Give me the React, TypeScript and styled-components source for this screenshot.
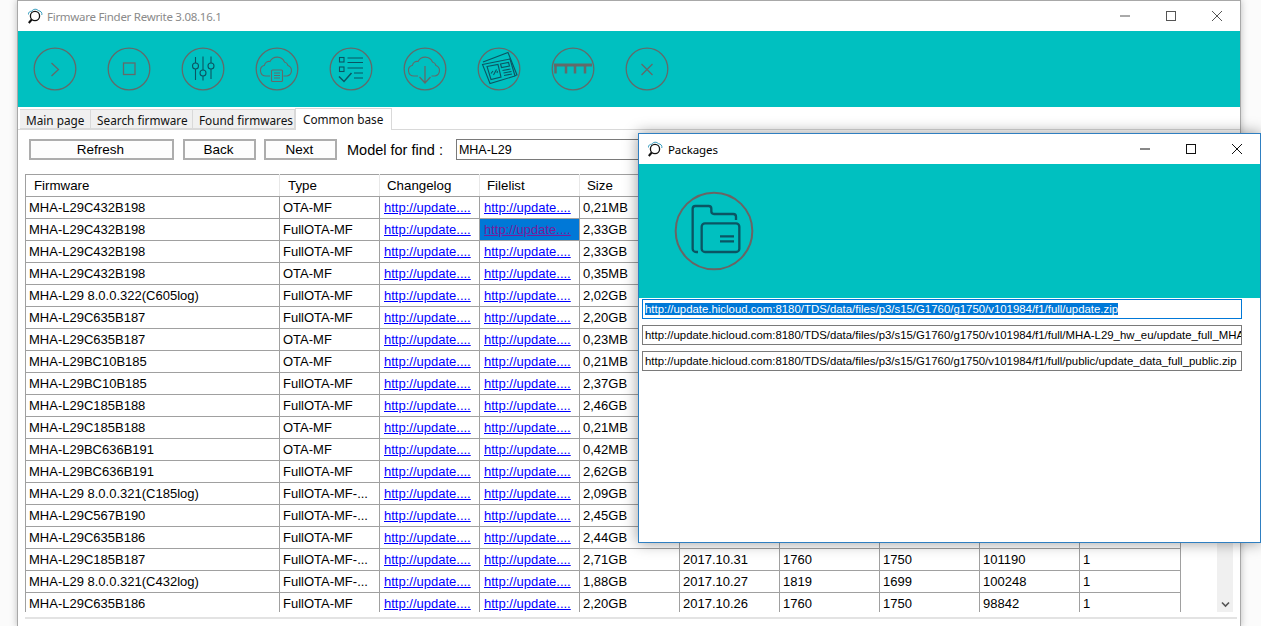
import React from "react";
import styled, {createGlobalStyle} from "styled-components";

const GlobalStyle = createGlobalStyle`
  html, body {
    margin: 0;
    padding: 0;
    background: #fbfbfb;
  }
`

const Desktop = styled.div`
  position: relative;
  width: 1261px;
  height: 626px;
  overflow: hidden;
  font-family: "Liberation Sans", Arial, sans-serif;
`

const MainWindow = styled.div`
  margin-left: 17px;
  width: 1222px;
  height: 626px;
  background: #fff;
  border: 1px solid #a8a8a8;
  border-bottom: none;
  box-shadow: 0 0 7px rgba(0, 0, 0, .25);
`

const TitleBar = styled.div`
  display: flex;
  align-items: center;
  height: 30px;
  padding-left: 9px;
`

const TitleText = styled.div<{ $muted?: boolean }>`
  margin-left: ${p => p.$muted ? 4 : 5}px;
  font-family: "Noto Sans", sans-serif;
  font-size: 11.5px;
  letter-spacing: ${p => p.$muted ? "-.28px" : "-.1px"};
  color: ${p => p.$muted ? "#8a8a8a" : "#000"};
  white-space: nowrap;
`

const WindowButtons = styled.div`
  display: flex;
  margin-left: auto;
`

const WindowButton = styled.div`
  display: flex;
  align-items: center;
  justify-content: center;
  width: 46px;
  height: 30px;
`

const Toolbar = styled.div`
  display: flex;
  align-items: center;
  gap: 30px;
  height: 76px;
  padding-left: 15px;
  background: #00c0c0;
`

const TabStrip = styled.div`
  display: flex;
  align-items: flex-end;
  height: 22px;
  padding-left: 2px;
  border-bottom: 1px solid #d9d9d9;
  font-family: "Noto Sans", sans-serif;
  font-size: 11.8px;
`

const Tab = styled.div<{ $active?: boolean; $width: number }>`
  box-sizing: border-box;
  width: ${p => p.$width}px;
  height: ${p => p.$active ? 22 : 20}px;
  padding-left: ${p => p.$active ? 7 : 6}px;
  line-height: ${p => p.$active ? 20 : 21}px;
  margin-bottom: ${p => p.$active ? -1 : 0}px;
  background: ${p => p.$active ? "#fff" : "#f0f0f0"};
  border: 1px solid #d9d9d9;
  border-bottom: ${p => p.$active ? "none" : "1px solid #d9d9d9"};
  border-left: ${p => p.$active ? "1px solid #d9d9d9" : "none"};
  white-space: nowrap;
  color: #111;
`

const ActionBar = styled.div`
  display: flex;
  align-items: center;
  height: 21px;
  margin-top: 9px;
  padding-left: 11px;
`

const ActionButton = styled.div<{ $width: number; $gap: number }>`
  box-sizing: border-box;
  width: ${p => p.$width}px;
  height: 21px;
  margin-right: ${p => p.$gap}px;
  padding-right: 2px;
  border: 2px solid #adadad;
  background: #fdfdfd;
  font-size: 13.5px;
  line-height: 18px;
  text-align: center;
  color: #000;
`

const FindLabel = styled.div`
  margin: 0 13px 0 1px;
  font-size: 14.5px;
  white-space: nowrap;
  color: #000;
`

const FindInput = styled.div`
  box-sizing: border-box;
  width: 300px;
  height: 21px;
  padding-left: 2px;
  border: 1px solid #7a7a7a;
  font-size: 12.5px;
  line-height: 20px;
  color: #000;
`

const GridFrame = styled.div`
  display: flex;
  box-sizing: border-box;
  width: 1212px;
  height: 445px;
  margin: 14px 0 0 7px;
  padding-bottom: 5px;
  border-bottom: 2px solid #e3e3e3;
`

const GridArea = styled.div`
  flex: 1;
  overflow: hidden;
`

const GridTable = styled.table`
  table-layout: fixed;
  width: 1155px;
  border-collapse: collapse;
  font-size: 13px;
  color: #000;
`

const HeadCell = styled.th<{ $width: number; $inset: number }>`
  box-sizing: border-box;
  width: ${p => p.$width}px;
  height: 22px;
  padding: 0 0 0 ${p => p.$inset}px;
  font-weight: normal;
  font-size: 13.3px;
  text-align: left;
  background: #fff;
  border: 1px solid #a0a0a0;
  border-left-color: #e8e8e8;
  border-right-color: #e8e8e8;

  &:first-child {
    border-left-color: #a0a0a0;
  }
`

const Cell = styled.td<{ $selected?: boolean; $link?: boolean }>`
  box-sizing: border-box;
  height: 22px;
  padding: 0 0 0 ${p => p.$link ? 4 : 3}px;
  border: 1px solid #a0a0a0;
  white-space: nowrap;
  overflow: hidden;
  background: ${p => p.$selected ? "#0078d7" : "#fff"};
`

const UpdateLink = styled.a<{ $visited?: boolean }>`
  color: ${p => p.$visited ? "#7a1a9a" : "#0000ff"};
  text-decoration: underline;
`

const ScrollTrack = styled.div`
  display: flex;
  align-items: flex-end;
  justify-content: center;
  width: 16px;
  margin-right: 4px;
  padding-bottom: 4px;
  box-sizing: border-box;
  background: #f0f0f0;
`

const PackagesWindow = styled.div`
  position: absolute;
  left: 638px;
  top: 133px;
  box-sizing: border-box;
  width: 623px;
  height: 410px;
  background: #fff;
  border: 1px solid #2f7fc1;
  box-shadow: 0 0 14px rgba(0, 0, 0, .4);
`

const PackagesTitle = styled(TitleBar)`
  padding-left: 8px;
`

const PackagesBanner = styled.div`
  display: flex;
  align-items: center;
  height: 134px;
  padding-left: 35px;
  background: #00c0c0;
`

const UrlList = styled.div`
  display: flex;
  flex-direction: column;
  gap: 6px;
  padding: 1px 0 0 3px;
`

const UrlField = styled.div<{ $focused?: boolean }>`
  box-sizing: border-box;
  width: 600px;
  height: 20px;
  padding-left: 2px;
  border: 1px solid ${p => p.$focused ? "#0078d7" : "#7a7a7a"};
  font-size: 11.4px;
  line-height: 18px;
  white-space: nowrap;
  overflow: hidden;
  color: #000;
`

const SelectedText = styled.span`
  background: #0078d7;
  color: #fff;
`

const GREY = "#626a6a"
const DARK = "#0b5563"

const Ring = ({children}: { children?: React.ReactNode }) => (
    <svg width="44" height="44" viewBox="0 0 44 44" fill="none" strokeWidth="1.1">
        <circle cx="22" cy="22" r="20.8" stroke={GREY} strokeWidth="1.3"/>
        {children}
    </svg>
)

const Cloud = () => (
    <path stroke={GREY}
          d="M15 29H11a5.5 5.5 0 0 1-1.500-10.800A4.500 4.500 0 0 1 15 14.500A8 8 0 0 1 29.500 15a5 5 0 0 1 3.500 3.500A5.500 5.500 0 0 1 32 29h-3.500"/>
)

const Logo = () => (
    <svg width="16" height="17" viewBox="0 0 16 17" fill="none">
        <path d="M1.500 6.500C1 4.500 3 3 4.800 3.300 6 .8 10 .5 11.500 2.800 13.500 2.800 15.500 4.500 14.800 7" stroke="#3a9fc0" strokeWidth="1"/>
        <circle cx="8" cy="8" r="4.600" stroke="#111" strokeWidth="1.300"/>
        <path d="M4.700 11.500 1.800 15" stroke="#111" strokeWidth="2"/>
    </svg>
)

const toolbarIcons = [
    <Ring key="start"><path d="M18.500 16 25.500 22.500 18.500 29" stroke={GREY} strokeWidth="1.300"/></Ring>,
    <Ring key="stop"><rect x="16.500" y="16" width="11.500" height="11.500" stroke={GREY} strokeWidth="1.300"/></Ring>,
    <Ring key="settings">
        <path stroke={DARK}
              d="M14.500 10v6M14.500 22V33M22 9.500V23M22 29V33.500M30 9.500V16M30 22V32"/>
        <circle cx="14.500" cy="19" r="3" stroke={DARK}/>
        <circle cx="22" cy="26" r="3" stroke={DARK}/>
        <circle cx="30" cy="19" r="3" stroke={DARK}/>
    </Ring>,
    <Ring key="cloud-doc">
        <Cloud/>
        <rect x="16.500" y="23" width="11" height="11.500" rx="1" stroke={GREY}/>
        <path d="M19 26h6M19 28.500h6M19 31h6" stroke={GREY}/>
    </Ring>,
    <Ring key="checklist">
        <g stroke={DARK}>
            <rect x="10.500" y="10.500" width="4.500" height="4.500"/>
            <rect x="10.500" y="20" width="4.500" height="4.500"/>
            <path d="M18.500 11h15.500M18.500 15.500h15.500M18.500 21h15.500M25 26h9M25 31h9"/>
            <path d="M10 29.500 15 34.500 22.500 26" strokeWidth="1.500"/>
        </g>
    </Ring>,
    <Ring key="download">
        <Cloud/>
        <path d="M22 19V36M16.500 30 22 36 27.500 30" stroke={GREY} strokeWidth="1.300"/>
    </Ring>,
    <Ring key="news">
        <g stroke={DARK}>
            <path d="M6 15 31 5.500 40 28 35 29.500"/>
            <path d="M5.500 17.500 33 12 38 29 13 36.500Z" fill="#00c0c0"/>
            <path d="M10 19.500 21 17.500 24 30 14 32.500Z"/>
            <path d="M14 26.500 16 24M16.500 28 19.500 22.500M20 26 20.500 24"/>
            <path d="M23.500 17 31.500 15.500 32.500 19 24.500 20.500Z"/>
            <path d="M25.500 23.500 33.500 22M26.500 26 34.500 24.500M27 28.500 35 27"/>
        </g>
    </Ring>,
    <Ring key="ram">
        <path d="M3 18h38" stroke={GREY} strokeWidth="3"/>
        <path d="M4.500 18v8.500M15 18v8.500M24 18v8.500M34 18v8.500" stroke={GREY} strokeWidth="2.500"/>
    </Ring>,
    <Ring key="close"><path d="M16.500 17 27.500 28M27.500 17 16.500 28" stroke={GREY} strokeWidth="1.300"/></Ring>,
]

const MinimizeIcon = ({color}: { color: string }) => (
    <svg width="12" height="12" viewBox="0 0 12 12"><path d="M1 6h10" stroke={color}/></svg>
)
const MaximizeIcon = ({color}: { color: string }) => (
    <svg width="12" height="12" viewBox="0 0 12 12" fill="none"><rect x="1.500" y="1.500" width="9" height="9" stroke={color}/></svg>
)
const CloseIcon = ({color}: { color: string }) => (
    <svg width="12" height="12" viewBox="0 0 12 12"><path d="M1 1 11 11M11 1 1 11" stroke={color}/></svg>
)

const FolderIcon = () => (
    <svg width="80" height="80" viewBox="42 39 240 240" fill="none">
        <circle cx="162" cy="159" r="115" stroke="#6a6464" strokeWidth="6"/>
        <g stroke={DARK} strokeWidth="7">
            <path d="M114 222H108a10 10 0 0 1-10-10V92a8 8 0 0 1 8-8h40a8 8 0 0 1 8 8v8a8 8 0 0 0 8 8h58a8 8 0 0 1 8 8v10"/>
            <rect x="125" y="136" width="113" height="86" rx="10"/>
            <path d="M180 175h42M180 190h42"/>
        </g>
    </svg>
)

const columns = [254, 100, 100, 100, 100, 100, 100, 100, 100, 101]
const headers = ["Firmware", "Type", "Changelog", "Filelist", "Size", "", "", "", "", ""]
const headerInsets = [8, 8, 7, 7, 7, 7, 7, 7, 7, 7]

const rows = [
    ["MHA-L29C432B198", "OTA-MF", "0,21MB"],
    ["MHA-L29C432B198", "FullOTA-MF", "2,33GB"],
    ["MHA-L29C432B198", "FullOTA-MF", "2,33GB"],
    ["MHA-L29C432B198", "OTA-MF", "0,35MB"],
    ["MHA-L29 8.0.0.322(C605log)", "FullOTA-MF", "2,02GB"],
    ["MHA-L29C635B187", "FullOTA-MF", "2,20GB"],
    ["MHA-L29C635B187", "OTA-MF", "0,23MB"],
    ["MHA-L29BC10B185", "OTA-MF", "0,21MB"],
    ["MHA-L29BC10B185", "FullOTA-MF", "2,37GB"],
    ["MHA-L29C185B188", "FullOTA-MF", "2,46GB"],
    ["MHA-L29C185B188", "OTA-MF", "0,21MB"],
    ["MHA-L29BC636B191", "OTA-MF", "0,42MB"],
    ["MHA-L29BC636B191", "FullOTA-MF", "2,62GB"],
    ["MHA-L29 8.0.0.321(C185log)", "FullOTA-MF-...", "2,09GB"],
    ["MHA-L29C567B190", "FullOTA-MF-...", "2,45GB"],
    ["MHA-L29C635B186", "FullOTA-MF", "2,44GB"],
    ["MHA-L29C185B187", "FullOTA-MF-...", "2,71GB", "2017.10.31", "1760", "1750", "101190", "1"],
    ["MHA-L29 8.0.0.321(C432log)", "FullOTA-MF-...", "1,88GB", "2017.10.27", "1819", "1699", "100248", "1"],
    ["MHA-L29C635B186", "FullOTA-MF", "2,20GB", "2017.10.26", "1760", "1750", "98842", "1"],
]

const base = "http://update.hicloud.com:8180/TDS/data/files/p3/s15/G1760/g1750/v101984/f1/full/"

export default function App() {
    return <Desktop>
        <GlobalStyle/>
        <MainWindow>
            <TitleBar>
                <Logo/>
                <TitleText $muted>Firmware Finder Rewrite 3.08.16.1</TitleText>
                <WindowButtons>
                    <WindowButton><MinimizeIcon color="#555"/></WindowButton>
                    <WindowButton><MaximizeIcon color="#555"/></WindowButton>
                    <WindowButton><CloseIcon color="#555"/></WindowButton>
                </WindowButtons>
            </TitleBar>
            <Toolbar>{toolbarIcons}</Toolbar>
            <TabStrip>
                <Tab $width={71}>Main page</Tab>
                <Tab $width={102}>Search firmware</Tab>
                <Tab $width={102}>Found firmwares</Tab>
                <Tab $active $width={97}>Common base</Tab>
            </TabStrip>
            <ActionBar>
                <ActionButton $width={145} $gap={9}>Refresh</ActionButton>
                <ActionButton $width={73} $gap={8}>Back</ActionButton>
                <ActionButton $width={73} $gap={9}>Next</ActionButton>
                <FindLabel>Model for find :</FindLabel>
                <FindInput>MHA-L29</FindInput>
            </ActionBar>
            <GridFrame>
                <GridArea>
                    <GridTable>
                        <thead>
                        <tr>
                            {headers.map((h, i) => <HeadCell key={i} $width={columns[i]} $inset={headerInsets[i]}>{h}</HeadCell>)}
                        </tr>
                        </thead>
                        <tbody>
                        {rows.map((r, i) => <tr key={i}>
                            <Cell>{r[0]}</Cell>
                            <Cell>{r[1]}</Cell>
                            <Cell $link><UpdateLink href="#">http://update....</UpdateLink></Cell>
                            <Cell $link $selected={i === 1}><UpdateLink href="#" $visited={i === 1}>http://update....</UpdateLink></Cell>
                            <Cell>{r[2]}</Cell>
                            <Cell>{r[3]}</Cell>
                            <Cell>{r[4]}</Cell>
                            <Cell>{r[5]}</Cell>
                            <Cell>{r[6]}</Cell>
                            <Cell>{r[7]}</Cell>
                        </tr>)}
                        </tbody>
                    </GridTable>
                </GridArea>
                <ScrollTrack>
                    <svg width="9" height="7" viewBox="0 0 9 7" fill="none">
                        <path d="M1 1.500 4.500 5 8 1.500" stroke="#555" strokeWidth="1.600"/>
                    </svg>
                </ScrollTrack>
            </GridFrame>
        </MainWindow>
        <PackagesWindow>
            <PackagesTitle>
                <Logo/>
                <TitleText>Packages</TitleText>
                <WindowButtons>
                    <WindowButton><MinimizeIcon color="#111"/></WindowButton>
                    <WindowButton><MaximizeIcon color="#111"/></WindowButton>
                    <WindowButton><CloseIcon color="#111"/></WindowButton>
                </WindowButtons>
            </PackagesTitle>
            <PackagesBanner><FolderIcon/></PackagesBanner>
            <UrlList>
                <UrlField $focused><SelectedText>{base}update.zip</SelectedText></UrlField>
                <UrlField>{base}MHA-L29_hw_eu/update_full_MHA-L29_hw_eu.zip</UrlField>
                <UrlField>{base}public/update_data_full_public.zip</UrlField>
            </UrlList>
        </PackagesWindow>
    </Desktop>
}
